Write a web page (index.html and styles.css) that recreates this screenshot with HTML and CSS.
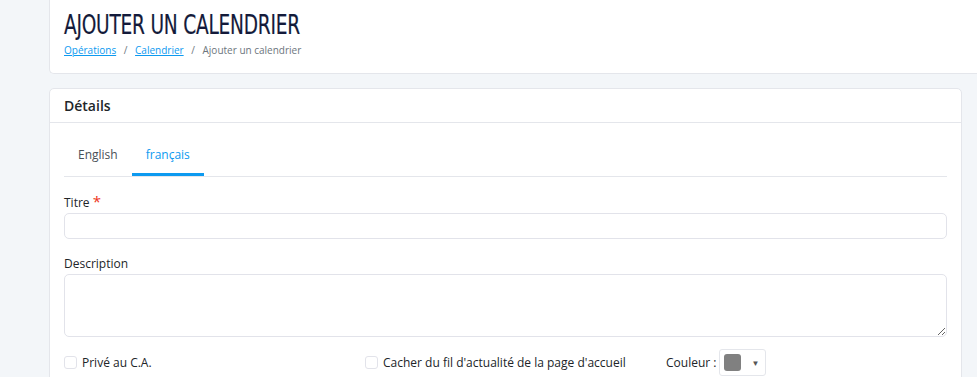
FILE: index.html
```html
<!DOCTYPE html>
<html lang="fr">
<head>
    <meta charset="UTF-8">
    <meta name="viewport" content="width=device-width, initial-scale=1.0">
    <title>Ajouter un calendrier</title>
    <link rel="stylesheet" href="styles.css">
</head>
<body>
    <div class="page">
        <div class="page-header">
            <h1><span>Ajouter un calendrier</span></h1>
            <div class="breadcrumb">
                <a href="#">Opérations</a>
                <span class="sep">/</span>
                <a href="#">Calendrier</a>
                <span class="sep">/</span>
                <span class="current">Ajouter un calendrier</span>
            </div>
        </div>

        <div class="card">
            <div class="card-header">Détails</div>
            <div class="card-body">
                <div class="tabs">
                    <div class="tab">English</div>
                    <div class="tab active">français</div>
                </div>

                <div class="form-group">
                    <label for="title">Titre <span class="required">*</span></label>
                    <input type="text" id="title">
                </div>

                <div class="form-group">
                    <label for="description">Description</label>
                    <textarea id="description"></textarea>
                </div>

                <div class="options">
                    <label class="check check-first"><input type="checkbox"> Privé au C.A.</label>
                    <label class="check check-second"><input type="checkbox"> Cacher du fil d'actualité de la page d'accueil</label>
                    <div class="color-field">
                        <span>Couleur :</span>
                        <div class="color-picker">
                            <span class="swatch"></span>
                            <span class="caret">▼</span>
                        </div>
                    </div>
                </div>
            </div>
        </div>
    </div>
</body>
</html>
```

FILE: styles.css
```css
body {
    margin: 0;
    background-color: #f3f6f9;
    font-family: "Open Sans", "Noto Sans", sans-serif;
    font-size: 12px;
    color: #212529;
    overflow: hidden;
}
.page {
    padding-left: 49px;
}
.page-header {
    background-color: #fff;
    border-bottom: 1px solid #e4e6eb;
    border-left: 1px solid #e4e6eb;
    border-bottom-left-radius: 5px;
    padding: 8px 14px 0;
    height: 74px;
    box-sizing: border-box;
}
h1 {
    margin: 0;
    font-family: "DejaVu Sans", sans-serif;
    font-stretch: condensed;
    font-weight: normal;
    font-size: 27px;
    line-height: 33px;
    color: #131a3a;
    text-transform: uppercase;
    letter-spacing: -0.3px;
}
h1 span {
    display: inline-block;
    transform: scaleX(0.765);
    transform-origin: left center;
    -webkit-text-stroke: 0.2px #131a3a;
}
.breadcrumb {
    margin-top: 2px;
    font-size: 10px;
    color: #6c757d;
}
.breadcrumb a {
    color: #0d9af0;
}
.breadcrumb .sep {
    margin: 0 5px;
}
.card {
    margin-top: 14px;
    margin-right: 15px;
    background-color: #fff;
    border: 1px solid #e4e6eb;
    border-radius: 5px;
}
.card-header {
    height: 33px;
    line-height: 33px;
    padding: 0 14px;
    font-size: 14px;
    font-weight: 600;
    border-bottom: 1px solid #e4e6eb;
}
.card-body {
    padding: 0 14px 20px;
}
.tabs {
    display: flex;
    margin-top: 20px;
    border-bottom: 1px solid #e4e6eb;
}
.tab {
    padding: 0 14px;
    height: 33px;
    line-height: 23px;
    color: #495057;
    box-sizing: border-box;
}
.tab.active {
    color: #0d9af0;
    border-bottom: 3px solid #0d9af0;
}
.form-group {
    margin-top: 15px;
}
.form-group + .form-group {
    margin-top: 16px;
}
label {
    display: block;
    margin-bottom: 1px;
    line-height: 18px;
}
.required {
    color: #ee3322;
    font-size: 15px;
}
input[type="text"],
textarea {
    display: block;
    width: 100%;
    box-sizing: border-box;
    border: 1px solid #e2e3ea;
    border-radius: 5px;
    background-color: #fff;
    font-family: inherit;
}
input[type="text"] {
    height: 26px;
}
textarea {
    height: 63px;
}
.options {
    display: flex;
    align-items: center;
    margin-top: 12px;
}
.options .check {
    display: flex;
    align-items: center;
    gap: 5px;
    margin: 0;
}
.check input {
    appearance: none;
    width: 13px;
    height: 13px;
    margin: 0;
    border: 1px solid #e2e3ea;
    border-radius: 3px;
    background-color: #fff;
}
.check-first {
    width: 301px;
}
.check-second {
    width: 301px;
    gap: 6px;
}
.color-field {
    display: flex;
    align-items: center;
    gap: 3px;
}
.color-picker {
    display: flex;
    align-items: center;
    width: 47px;
    height: 27px;
    box-sizing: border-box;
    border: 1px solid #e4e6eb;
    border-radius: 3px;
    padding-left: 4px;
}
.swatch {
    width: 17px;
    height: 17px;
    border-radius: 3px;
    background-color: #808080;
}
.caret {
    margin-left: 10px;
    font-size: 8px;
    color: #555;
}
```
